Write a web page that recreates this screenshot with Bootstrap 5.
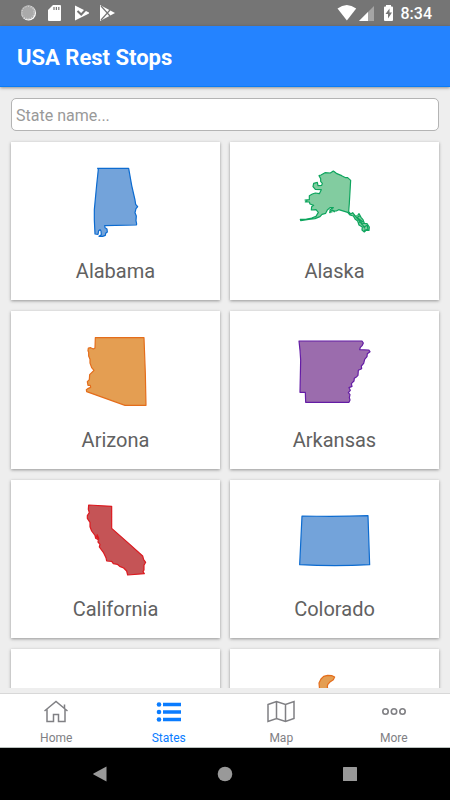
<!DOCTYPE html>
<html lang="en">
<head>
<meta charset="utf-8">
<meta name="viewport" content="width=device-width, initial-scale=1">
<title>USA Rest Stops</title>
<link rel="stylesheet" href="https://cdn.jsdelivr.net/npm/bootstrap@5.3.0/dist/css/bootstrap.min.css">
<style>
  body { font-family: Roboto, "Liberation Sans", sans-serif; background: #eee; }
  .status-bar { height: 26px; background: #757575; color: #fff; padding: 2px 18px 0 20px; font-size: 16px; line-height: 24px; font-weight: 500; }
  .app-header { height: 61px; background: #2483ff; border-bottom: 1px solid #0a7cf5; box-shadow: 0 1px 3px rgba(0,0,0,.4); padding: 4px 17px 0; }
  .app-title { font-size: 22px; line-height: 28px; font-weight: 700; color: #fff; }
  .list-area { padding: 11px 11px 0; margin-bottom: 5px; min-height: 0; overflow-y: auto; scrollbar-width: none; }
  .list-area::-webkit-scrollbar { display: none; }
  .search-box { height: 33px; padding: 2px 4px 0; font-size: 16px; border: 1px solid #b4b4b4; border-radius: 5px; margin-bottom: 11px; }
  .search-box::placeholder { color: #999; }
  .state-grid { display: grid; grid-template-columns: 1fr 1fr; gap: 11px 10px; }
  .state-tile { height: 158px; padding-top: 15px; background: #fff; color: #616161; font-size: 20px; line-height: 24px; box-shadow: 0 1px 3px rgba(0,0,0,.38); }
  .state-tile:hover { color: #616161; }
  .state-tile svg { width: 90px; height: 90px; margin-bottom: 12px; }
  .state-tile path { stroke-width: 3.6; stroke-linejoin: round; }
  .blue-shape { fill: #73a3da; stroke: #0c6bd0; }
  .green-shape { fill: #82cca0; stroke: #0ea55e; }
  .orange-shape { fill: #e49e52; stroke: #e46d1b; }
  .purple-shape { fill: #9b6cad; stroke: #641ca5; }
  .red-shape { fill: #c55456; stroke: #dc1a20; }
  .tab-strip { height: 55px; background: #fff; border-top: 1px solid #d8d8d8; border-bottom: 1px solid #b9c0bd; }
  .tab-strip a { color: #808084; font-size: 12px; line-height: 16px; padding-top: 4px; }
  .tab-strip a.active { color: #0a7cff; }
  .tab-strip svg { width: 30px; height: 28px; margin-bottom: 4px; fill: none; stroke: currentColor; }
  .system-keys { height: 52px; background: #000; padding: 0 38px; }
  .system-keys svg { width: 16px; height: 16px; fill: #999; }
</style>
<script src="https://cdn.jsdelivr.net/npm/bootstrap@5.3.0/dist/js/bootstrap.bundle.min.js"></script>
</head>
<body class="vh-100 d-flex flex-column overflow-hidden">

<div class="status-bar d-flex align-items-center justify-content-between flex-shrink-0">
  <svg width="98" height="22" viewBox="20 3 98 22" fill="#fff" aria-hidden="true">
    <circle cx="28.6" cy="13" r="7.4"/>
    <circle cx="28" cy="12.5" r="7" fill="#aaa"/>
    <circle cx="28" cy="12.5" r="6" fill="none" stroke="#ddd" stroke-width="1" stroke-dasharray="1 1.5"/>
    <path d="M53 5h7a1 1 0 0 1 1 1v14a1 1 0 0 1-1 1H49a1 1 0 0 1-1-1V10z"/>
    <path d="M54 7v3M56.400 7v3M58.800 7v3" stroke="#757575" stroke-width="1.200"/>
    <path d="M75 5.500L88 12a1 1 0 0 1 0 2L75 20.500z"/>
    <path d="M77.500 11l3.700 3.500 7-7.500" fill="none" stroke="#757575" stroke-width="2"/>
    <path d="M100 5l15 8-15 8z"/>
    <path d="M101 6l9 10M101 20l9-10" stroke="#757575" stroke-width="1.200"/>
  </svg>
  <div class="d-flex align-items-center gap-2">
    <svg width="57" height="18" viewBox="337 5 57 18" fill="#fff" aria-hidden="true">
      <path d="M338.500 8.500q9.300-7 18.700 0L347.900 20.500z"/>
      <path d="M360 21L375 6v15z" fill="#a5a5a5"/>
      <path d="M360 21l9-9v9z"/>
      <path d="M387 5h5v1.500h1q1 0 1 1V20q0 1-1 1h-7q-1 0-1-1V7.500q0-1 1-1h1z"/>
      <path d="M390.500 8.500l-4 5.500h2.500v4.500l4-6h-2.500z" fill="#757575"/>
    </svg>
    <span>8:34</span>
  </div>
</div>

<header class="app-header d-flex align-items-center flex-shrink-0 position-relative">
  <h1 class="app-title mb-0">USA Rest Stops</h1>
</header>

<main class="list-area flex-grow-1">
  <input type="search" class="search-box form-control" placeholder="State name..." aria-label="State name">
  <div class="state-grid">
    <a href="#alabama" class="state-tile d-flex flex-column align-items-center text-decoration-none">
      <svg viewBox="70 157 90 90" aria-hidden="true"><g transform="translate(80 160) scale(.3333)">
        <path class="blue-shape" d="M50 25H143L152 76 162 120 164 133 170 140 165 146 162 158 166 168 165 182 167 192 166 195 71 197 72 203 78 207 79 216 74 220 73 226 65 229 54 229 61 224 60 213 57 209 53 212 51 223 42 222 40 180V149L47 75 52 28z"/>
      </g></svg>
      <span>Alabama</span>
    </a>
    <a href="#alaska" class="state-tile d-flex flex-column align-items-center text-decoration-none">
      <svg viewBox="290 157 90 90" aria-hidden="true"><g transform="translate(290 160) scale(.3333)">
        <path class="green-shape" d="M87 47L93 45 105 38 121 39 130 33 139 40 155 47 167 53 173 53 182 61 178 130 176 155 182 162 188 158 195 167 203 166 207 161 213 172 219 179 223 190 231 191 238 201 237 211 228 211 223 216 216 210 217 201 207 195 203 183 196 178 190 168 180 165 173 157 156 152 146 149 139 153 129 153 120 158 120 149 130 143 120 143 112 150 107 160 96 163 90 170 75 176 56 178 32 182 31 178 47 178 65 174 78 169 85 157 78 149 64 150 65 140 71 136 60 132 58 126 46 126 51 122 45 120 58 119 58 107 67 102 76 99 88 101 94 89 76 88 69 80 71 70 82 67 84 77 95 76 97 70 92 64 92 56z"/>
        <path class="green-shape" d="M118 158l9-8 8 6M197 170l17 19 11 16M204 175l14 10-13 2M220 202l12-6 2 12-12 3M191 164l10 9 8-6M208 181l8 12 6-4"/>
      </g></svg>
      <span>Alaska</span>
    </a>
    <a href="#arizona" class="state-tile d-flex flex-column align-items-center text-decoration-none">
      <svg viewBox="70 326 90 90" aria-hidden="true"><g transform="translate(75 325) scale(.3333)">
        <path class="orange-shape" d="M58 38H204L208 145 210 241H147L32 200 31 194 37 190 44 187 43 181 36 181 34 170 40 164 41 149 54 136 47 128 42 114 42 103 38 93 38 82 36 77 37 69 44 68 52 72 57 69z"/>
      </g></svg>
      <span>Arizona</span>
    </a>
    <a href="#arkansas" class="state-tile d-flex flex-column align-items-center text-decoration-none">
      <svg viewBox="290 326 90 90" aria-hidden="true"><g transform="translate(290 325) scale(.3333)">
        <path class="purple-shape" d="M27 48H216L220 54 217 61 211 67 209 74 236 75 240 80 232 86 231 95 224 103 221 115 214 123 215 131 205 136 204 151 198 157 193 160 192 168 184 176 186 184 177 188 181 196 175 203 180 209 178 218 180 225 177 232H47L46 202H30L32 105 30 76z"/>
      </g></svg>
      <span>Arkansas</span>
    </a>
    <a href="#california" class="state-tile d-flex flex-column align-items-center text-decoration-none">
      <svg viewBox="70 495 90 90" aria-hidden="true"><g transform="translate(75 495) scale(.3333)">
        <path class="red-shape" d="M38 30L107 34V100L158 145 200 183 203 194 209 202 204 211 204 225 201 230 205 236 155 240 152 228 143 219 131 214 124 208 112 206 107 199 92 198 90 188 82 172 70 156 72 148 66 141 67 134 59 130 57 121 47 108 42 95 42 82 34 70 34 62 40 53 37 43z"/>
        <path class="red-shape" d="M63 118l5 12-8-7 9 10"/>
      </g></svg>
      <span>California</span>
    </a>
    <a href="#colorado" class="state-tile d-flex flex-column align-items-center text-decoration-none">
      <svg viewBox="290 495 90 90" aria-hidden="true"><g transform="translate(290 500) scale(.3333)">
        <path class="blue-shape" d="M36 48Q136 51 234 47L239 194Q134 200 29 194z"/>
      </g></svg>
      <span>Colorado</span>
    </a>
    <a href="#connecticut" class="state-tile" aria-label="Connecticut"></a>
    <a href="#delaware" class="state-tile d-flex flex-column align-items-center text-decoration-none" aria-label="Delaware">
      <svg viewBox="290 664 90 90" aria-hidden="true"><g transform="translate(225 630) scale(.3333)">
        <path class="orange-shape" d="M284 180L282 159 288 147 296 139 308 136 320 137 329 141 325 149 316 155 308 164 307 171 311 185z"/>
      </g></svg>
    </a>
  </div>
</main>

<nav class="tab-strip d-flex flex-shrink-0" aria-label="Main">
  <a href="#home" class="flex-fill w-25 d-flex flex-column align-items-center text-decoration-none">
    <svg viewBox="0 0 30 28" stroke-width="1.500"><path d="M3.500 13L15 3.500 26.500 13M6 11.500V23.500H12.500V16.500H17.500V23.500H24V11M23.500 10V6.500"/></svg>
    Home
  </a>
  <a href="#states" class="active flex-fill w-25 d-flex flex-column align-items-center text-decoration-none" aria-current="page">
    <svg viewBox="0 0 30 28" stroke-width="3.400"><path d="M9 6.500H27M9 14H27M9 21.500H27"/><g fill="currentColor" stroke="none"><circle cx="5" cy="6.500" r="2.300"/><circle cx="5" cy="14" r="2.300"/><circle cx="5" cy="21.500" r="2.300"/></g></svg>
    States
  </a>
  <a href="#map" class="flex-fill w-25 d-flex flex-column align-items-center text-decoration-none">
    <svg viewBox="0 0 30 28" stroke-width="1.500"><path d="M2 6.500L10.500 3.500 19.500 6.500 28 3.500V20.500L19.500 23.500 10.500 20.500 2 23.500zM10.500 3.500V20.500M19.500 6.500V23.500"/></svg>
    Map
  </a>
  <a href="#more" class="flex-fill w-25 d-flex flex-column align-items-center text-decoration-none">
    <svg viewBox="0 0 30 28" stroke-width="1.600"><circle cx="6.500" cy="13.500" r="2.700"/><circle cx="15" cy="13.500" r="2.700"/><circle cx="23.500" cy="13.500" r="2.700"/></svg>
    More
  </a>
</nav>

<div class="system-keys d-flex align-items-center flex-shrink-0">
  <button type="button" class="btn p-0 border-0 flex-fill d-flex justify-content-center" aria-label="Back"><svg viewBox="0 0 16 16"><path d="M14.500.5v15L1.500 8.500q-.8-.5 0-1z"/></svg></button>
  <button type="button" class="btn p-0 border-0 flex-fill d-flex justify-content-center" aria-label="Home screen"><svg viewBox="0 0 16 16"><circle cx="8" cy="8" r="7.300"/></svg></button>
  <button type="button" class="btn p-0 border-0 flex-fill d-flex justify-content-center" aria-label="Recent apps"><svg viewBox="0 0 16 16"><rect x="1" y="1" width="14" height="14" rx=".5"/></svg></button>
</div>

</body>
</html>
